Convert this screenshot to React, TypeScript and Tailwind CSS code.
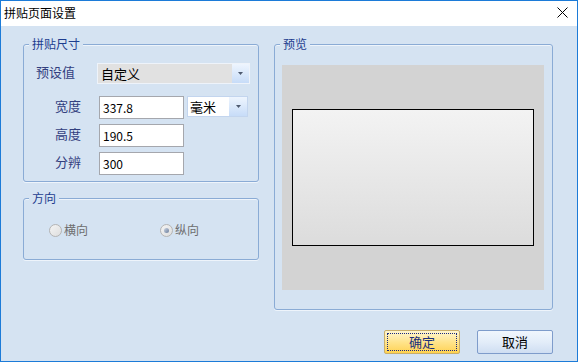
import React from "react"

const font = { fontFamily: '"Noto Sans CJK SC", "Noto Sans", sans-serif' }

const Arrow = () => (
  <svg width="5" height="3" viewBox="0 0 5 3">
    <path d="M0 0h5L2.5 3z" fill="#4e5a70" />
  </svg>
)

const Group = ({ title, className, children }: { title: string; className: string; children: React.ReactNode }) => (
  <div className={`relative border border-[#8aabd5] rounded-[3px] shadow-[0_1px_0_#eef4fb,inset_0_1px_0_#eef4fb] ${className}`}>
    <span className="absolute left-[5px] -top-[9px] px-[3px] bg-[#d5e3f2] text-[12px] leading-[16px] text-[#1d3d8f]">
      {title}
    </span>
    {children}
  </div>
)

const Field = ({ label, value, children }: { label: string; value: string; children?: React.ReactNode }) => (
  <div className="flex items-center pl-[31px]">
    <span className="w-[44px] text-[13px] leading-[16px] text-[#33407f] -mt-[3px]">{label}</span>
    <div className="w-[85px] h-[23px] border border-[#a5a7ad] bg-white flex items-center pl-[3px] text-[12px] text-black">
      {value}
    </div>
    {children}
  </div>
)

const Radio = ({ label, checked }: { label: string; checked?: boolean }) => (
  <div className="flex items-center gap-[2px]">
    <span className="w-[13px] h-[13px] rounded-full border border-[#b4b4b4] bg-gradient-to-br from-[#f4f4f4] to-[#dedede] flex items-center justify-center">
      {checked && <span className="w-[5px] h-[5px] rounded-full bg-gradient-to-br from-[#c9d3e2] to-[#6d7f9c]" />}
    </span>
    <span className="text-[12px] leading-[16px] text-[#6e6e6e]">{label}</span>
  </div>
)

export default function App() {
  return (
    <div style={font} className="w-[578px] h-[362px] border border-[#1c7bd8] bg-[#d5e3f2] flex flex-col">
      <div className="h-[25px] bg-white flex items-center justify-between pl-[3px] pr-[9px]">
        <span className="text-[12px] leading-[16px] text-black -mt-[2px]">拼贴页面设置</span>
        <svg width="11" height="11" viewBox="0 0 11 11" className="-mt-[2px]">
          <path d="M0.5 0.5L10.5 10.5M10.5 0.5L0.5 10.5" stroke="#000" strokeWidth="1" />
        </svg>
      </div>

      <div className="flex-1 flex flex-col pl-[22px] pr-[24px]">
        <div className="flex gap-[15px] mt-[18px]">
          <div className="w-[236px] flex flex-col">
            <Group title="拼贴尺寸" className="h-[138px] pt-[18px]">
              <div className="flex items-center pl-[12px]">
                <span className="w-[61px] text-[13px] leading-[16px] text-[#33407f] -mt-[4px]">预设值</span>
                <div className="w-[153px] h-[21px] border border-[#eef3fa] bg-[#e1e1e1] flex items-center">
                  <span className="flex-1 pl-[3px] text-[13px] leading-[16px] text-black">自定义</span>
                  <span className="w-[17px] h-full bg-gradient-to-b from-[#eef5fe] to-[#c7dcf8] flex items-center justify-center">
                    <Arrow />
                  </span>
                </div>
              </div>
              <div className="flex flex-col gap-[5px] mt-[12px]">
                <Field label="宽度" value="337.8">
                  <div className="ml-[3px] w-[61px] h-[21px] -mt-[2px] border border-[#c3d5ee] bg-white flex items-center">
                    <span className="flex-1 pl-[2px] text-[13px] leading-[16px] text-black">毫米</span>
                    <span className="w-[18px] h-full bg-gradient-to-b from-[#eef5fe] to-[#c7dcf8] flex items-center justify-center">
                      <Arrow />
                    </span>
                  </div>
                </Field>
                <Field label="高度" value="190.5" />
                <Field label="分辨" value="300" />
              </div>
            </Group>

            <Group title="方向" className="h-[62px] mt-[16px] flex items-center pl-[25px] pt-[2px]">
              <div className="w-[111px]">
                <Radio label="横向" />
              </div>
              <Radio label="纵向" checked />
            </Group>
          </div>

          <Group title="预览" className="w-[279px] h-[266px] pt-[20px] pl-[7px]">
            <div className="w-[262px] h-[225px] bg-[#d3d3d3] flex items-center justify-center">
              <div className="w-[242px] h-[137px] border border-black bg-gradient-to-b from-[#f3f3f3] to-[#dcdcdc]" />
            </div>
          </Group>
        </div>

        <div className="flex justify-end gap-[17px] mt-[20px]">
          <button className="w-[76px] h-[24px] rounded-[2px] border border-[#c9ae6a] bg-gradient-to-b from-[#fff6d0] via-[#ffe48c] to-[#ffd24e] p-[2px]">
            <span className="w-full h-full border border-dotted border-[#1a2a80] flex items-center justify-center text-[13px] leading-[16px] text-[#1a2f7c]">
              确定
            </span>
          </button>
          <button className="w-[76px] h-[24px] rounded-[2px] border border-[#7e9ccb] bg-gradient-to-b from-[#f0f6fd] via-[#e3edf9] to-[#cfdef2] flex items-center justify-center text-[13px] leading-[16px] text-black">
            取消
          </button>
        </div>
      </div>
    </div>
  )
}
